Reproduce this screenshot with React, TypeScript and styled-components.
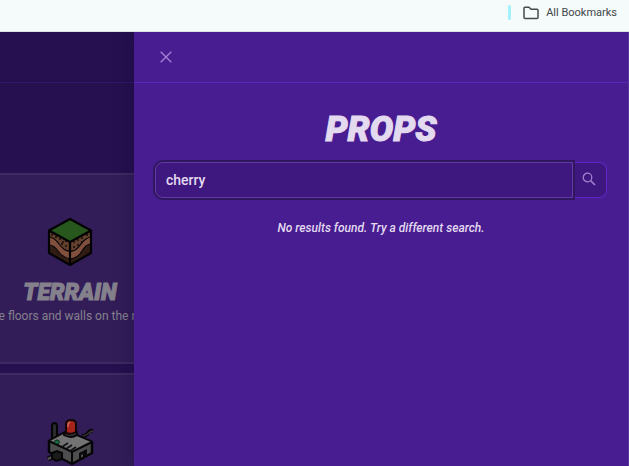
import React from "react";
import styled, { createGlobalStyle } from "styled-components";

const GlobalStyle = createGlobalStyle`
  *, *::before, *::after { box-sizing: border-box; }
  body { margin: 0; background: #261050; }
  h1, h2, p { margin: 0; }
  button, input { font: inherit; color: inherit; }
`;

const Page = styled.div`
  display: flex;
  flex-direction: column;
  height: 100vh;
  overflow: hidden;
  font-family: Roboto, "Liberation Sans", sans-serif;
`;

const BookmarkBar = styled.header`
  flex: none;
  display: flex;
  align-items: center;
  justify-content: flex-end;
  gap: 12px;
  height: 32px;
  padding: 0 12px 6px 0;
  background: #f5fbfb;
  border-bottom: 1px solid #dbe1e2;
`;

const Divider = styled.span`
  width: 3px;
  height: 15px;
  border-radius: 2px;
  background: #a2f1fb;
`;

const BookmarkButton = styled.button`
  display: flex;
  align-items: center;
  gap: 7px;
  padding: 0;
  border: 0;
  background: none;
  color: #404748;
  font-size: 11px;
  line-height: 16px;
`;

const Stage = styled.div`
  flex: 1;
  display: flex;
  min-height: 0;
  overflow: hidden;
`;

const Backdrop = styled.main`
  flex: 1;
  min-width: 0;
  overflow: hidden;
  background: #261050;
  color: #85818c;
`;

const BackdropHeader = styled.div`
  height: 51px;
  margin-bottom: 90px;
  border-bottom: 1px solid #35156b;
`;

const CardList = styled.div`
  display: flex;
  flex-direction: column;
  gap: 9px;
`;

const Card = styled.section`
  display: flex;
  flex-direction: column;
  align-items: center;
  height: 191px;
  padding-top: 42px;
  background: #321d59;
  border: solid #402a62;
  border-width: 2px 0;
`;

const CardTitle = styled.h2`
  margin: 12px 0 0 6px;
  font-size: 23px;
  font-style: italic;
  font-weight: 900;
  line-height: 28px;
  -webkit-text-stroke: 1px currentColor;
`;

const CardText = styled.p`
  font-size: 12px;
  line-height: 18px;
  white-space: nowrap;
`;

const Drawer = styled.aside`
  position: relative;
  flex: none;
  width: min(495px, 100%);
  background: #471d91;
  border-right: 1px solid #5a35a0;
  box-shadow: 0 0 20px rgba(10, 0, 30, 0.3);
  color: #e4daf0;
`;

const DrawerHeader = styled.div`
  display: flex;
  align-items: center;
  height: 51px;
  padding-left: 24px;
  border-bottom: 1px solid #5b25bd;
`;

const IconButton = styled.button`
  display: flex;
  padding: 0;
  border: 0;
  background: none;
  color: #a684d4;
`;

const DrawerBody = styled.div`
  display: flex;
  flex-direction: column;
  padding: 25px 21px;
`;

const Title = styled.h1`
  font-size: 35px;
  font-style: italic;
  font-weight: 900;
  line-height: 44px;
  text-align: center;
  -webkit-text-stroke: 1px currentColor;
`;

const SearchForm = styled.form`
  display: flex;
  height: 36px;
  margin-top: 10px;
`;

const SearchInput = styled.input`
  position: relative;
  z-index: 1;
  flex: 1;
  min-width: 0;
  padding: 0 10px;
  background: #3e187f;
  border: 1px solid #6239a5;
  border-radius: 8px 0 0 8px;
  box-shadow: 0 0 0 2px #30175f;
  font-size: 14px;
  font-weight: 500;
  outline: none;
`;

const SearchButton = styled.button`
  display: flex;
  align-items: center;
  justify-content: center;
  width: 34px;
  padding: 0 2px 2px 0;
  background: #3e187f;
  border: 1px solid #6026c8;
  border-left: 0;
  border-radius: 0 8px 8px 0;
  color: #a684d4;
`;

const Message = styled.p`
  margin-top: 20px;
  font-size: 12px;
  font-style: italic;
  font-weight: 500;
  line-height: 20px;
  text-align: center;
`;

const FolderIcon = () => (
  <svg width="16" height="14" viewBox="0 0 16 14" fill="none" stroke="#444b4c" strokeWidth="1.5" strokeLinejoin="round" aria-hidden="true">
    <path d="M1 2.2Q1 1.2 2 1.2H6L8 3.2H14Q15 3.2 15 4.2V11.4Q15 12.4 14 12.4H2Q1 12.4 1 11.4Z" />
  </svg>
);

const CloseIcon = () => (
  <svg width="16" height="16" viewBox="0 0 16 16" fill="none" stroke="currentColor" strokeWidth="1.3" aria-hidden="true">
    <path d="M2.7 2.7L13.3 13.3M13.3 2.7L2.7 13.3" />
  </svg>
);

const SearchIcon = () => (
  <svg width="16" height="16" viewBox="0 0 16 16" fill="none" stroke="currentColor" strokeWidth="1.2" aria-hidden="true">
    <circle cx="6.5" cy="6.5" r="4.3" />
    <path d="M9.7 9.7L14 14" strokeWidth="1.5" />
  </svg>
);

const TerrainIcon = () => (
  <svg width="48" height="50" viewBox="-3 0 48 50" overflow="visible" aria-hidden="true">
    <path d="M24 2L45 13.5V36L24 48L3 36V13.5Z" fill="#301c12" />
    <path d="M3 20Q10 21 14 28T24 35Q30 35 35 28T45 20V27Q39 28 36 34T24 42Q17 41 12 34T3 28Z" fill="#80503d" />
    <path d="M3 14L24 25L45 14V20Q39 21 34 28T24 34Q18 34 13 27T3 20Z" fill="#62402b" stroke="#08050b" strokeWidth="1.1" />
    <path d="M3 28Q8 28 12 34T24 42Q32 41 36 34T45 27" fill="none" stroke="#08050b" strokeWidth="1.1" />
    <path d="M5 18H7M9 20H11M13 22H15M16 25H18M19 24H21M15 27H17M19 29H21M27 25H29M31 23H33M35 21H37M40 18H42M27 30H29M31 28H33M35 25H37" stroke="#160c0b" strokeWidth="1.3" />
    <path d="M24 2L45 13.5L24 25L3 13.5Z" fill="#28571d" />
    <path d="M24 2L45 13.5V36L24 48L3 36V13.5ZM3 13.5L24 25L45 13.5M24 25V48" fill="none" stroke="#020204" strokeWidth="2.2" strokeLinejoin="round" />
  </svg>
);

const DeviceIcon = () => (
  <svg width="48" height="50" viewBox="-3 -2 48 50" overflow="visible" aria-hidden="true">
    <path d="M36 17Q40 17 42 14T47 12" fill="none" stroke="#09080b" strokeWidth="4" />
    <path d="M37 17Q41 16 43 14T47 12" fill="none" stroke="#373639" strokeWidth="1.5" />
    <path d="M6 21V7Q6 4 8.5 4T11 7V22Z" fill="#292b2c" stroke="#060506" strokeWidth="2" />
    <path d="M3 22L21 12L46 23V34L26 45L3 33Z" fill="#4d4d4e" stroke="#050507" strokeWidth="2.5" strokeLinejoin="round" />
    <path d="M4 22L21 13L45 23L26 33Z" fill="#747373" />
    <path d="M3 22L26 33L46 23M26 33V45" fill="none" stroke="#050507" strokeWidth="2" />
    <path d="M18 14V16Q25 20 31 16V13Z" fill="#373638" stroke="#080609" strokeWidth="2" />
    <path d="M20 14V5Q20 1 25 1T30 5V13Q25 16 20 14Z" fill="#a5251d" stroke="#130608" strokeWidth="2" />
    <path d="M22 8V6Q22 4 24 3" fill="none" stroke="#c8695b" strokeWidth="1.5" />
    <ellipse cx="11" cy="23" rx="2.4" ry="2" fill="#167342" stroke="#10231b" />
    <path d="M16 28L22 24M20 30L26 26M24 32L30 28" stroke="#111015" strokeWidth="1.7" />
    <path d="M33 42V34L41 30V37L37 39V35L35 36V41Z" fill="#09090b" />
    <path d="M2 40L10 36" stroke="#08080a" strokeWidth="5" />
    <path d="M2 40L8 37" stroke="#575657" strokeWidth="2" />
    <path d="M6 34L11 32L16 34V40L10 42L6 39Z" fill="#1c1b1c" stroke="#050507" strokeWidth="2" />
  </svg>
);

export default function App() {
  return (
    <Page>
      <GlobalStyle />
      <BookmarkBar>
        <Divider />
        <BookmarkButton type="button"><FolderIcon />All Bookmarks</BookmarkButton>
      </BookmarkBar>
      <Stage>
        <Backdrop>
          <BackdropHeader />
          <CardList>
            <Card>
              <TerrainIcon />
              <CardTitle>TERRAIN</CardTitle>
              <CardText>e floors and walls on the r</CardText>
            </Card>
            <Card><DeviceIcon /></Card>
          </CardList>
        </Backdrop>
        <Drawer aria-labelledby="drawer-title">
          <DrawerHeader>
            <IconButton type="button" aria-label="Close"><CloseIcon /></IconButton>
          </DrawerHeader>
          <DrawerBody>
            <Title id="drawer-title">PROPS</Title>
            <SearchForm role="search" onSubmit={(event) => event.preventDefault()}>
              <SearchInput type="text" aria-label="Search props" defaultValue="cherry" />
              <SearchButton type="submit" aria-label="Search"><SearchIcon /></SearchButton>
            </SearchForm>
            <Message role="status">No results found. Try a different search.</Message>
          </DrawerBody>
        </Drawer>
      </Stage>
    </Page>
  );
}
